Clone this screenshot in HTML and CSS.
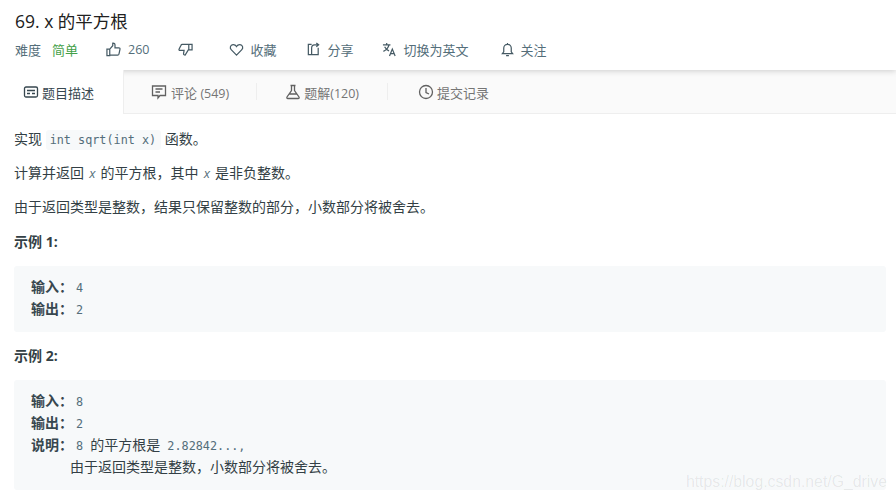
FILE: index.html
```html
<!DOCTYPE html>
<html lang="zh">
<head>
    <meta charset="UTF-8">
    <title>69. x 的平方根</title>
    <link rel="stylesheet" href="styles.css">
</head>
<body>
    <div class="header">
        <h1>69. x 的平方根</h1>
        <div class="actions">
            <span class="label">难度</span>
            <span class="easy">简单</span>
            <span class="action like">
                <svg width="15" height="15" viewBox="0 0 16 16"><path d="M1 7.500h3v7H1zM4 7.500l3.200-3.600V1.200c1.400-.3 2.400.6 2.400 2v3h4c1 0 1.500.7 1.300 1.600l-1.100 5.200c-.2.7-.7 1-1.300 1H4"/></svg>
                <span class="num">260</span>
            </span>
            <span class="action dislike">
                <svg width="15" height="15" viewBox="0 0 16 16"><path d="M15 2.500H4.500c-.7 0-1.100.3-1.300 1L1.100 7.600c-.3.8.2 1.400 1 1.400h4.400l-.6 3.300c-.1 1 .6 1.700 1.700 1.700l3.400-5.500H15zM11.500 2.500V8.500"/></svg>
            </span>
            <span class="action fav">
                <svg width="15" height="15" viewBox="0 0 16 16"><path d="M8 14L2.300 8.200C.6 6.400 1.300 3 4.300 2.700 5.900 2.600 7.200 3.400 8 4.800 8.800 3.400 10.100 2.600 11.700 2.700c3 .3 3.700 3.700 2 5.500z"/></svg>
                收藏
            </span>
            <span class="action share">
                <svg width="15" height="15" viewBox="0 0 16 16"><path d="M6 2.500H2.500v11h10.500V6M6 13V6.500c0-2 1.200-3.500 3-3.500h4.500M11 1l2.500 2L11 5"/></svg>
                分享
            </span>
            <span class="action lang">
                <svg width="15" height="15" viewBox="0 0 16 16"><path d="M1 3h8M5 1v2M7.500 3C6.800 6 4.500 8.500 1.500 10M2.800 5c1 2 2.700 3.500 4.700 4.500M8 15l3-7.500 3 7.500M9.200 12.500h3.600"/></svg>
                切换为英文
            </span>
            <span class="action follow">
                <svg width="15" height="15" viewBox="0 0 16 16"><path d="M2.500 12.500h11l-1.500-2V6.500C12 4 10.300 2.500 8 2.500S4 4 4 6.500v4zM6.500 14.500h3M8 1v1.500"/></svg>
                关注
            </span>
        </div>
    </div>

    <div class="tabs">
        <div class="tab active">
            <svg width="16" height="16" viewBox="0 0 16 16"><rect x="1.500" y="3" width="13" height="10" rx="1.500"/><path d="M4 6.500h8M4 9.500h3M9 9.500h3"/></svg>
            <span>题目描述</span>
        </div>
        <div class="tab comments">
            <svg width="16" height="16" viewBox="0 0 16 16"><path d="M1.500 2h13v9.500H9l-2 2.500v-2.500H1.500zM4.500 5h7M4.500 8h4.500"/></svg>
            <span>评论 <span class="count">(549)</span></span>
        </div>
        <div class="tab solutions">
            <svg width="16" height="16" viewBox="0 0 16 16"><path d="M5.500 1.500h5M6.500 1.500v5L2 13c-.5.900 0 1.500.9 1.500h10.200c.9 0 1.400-.6.900-1.500L9.500 6.500v-5M4.500 10h7"/></svg>
            <span>题解<span class="count">(120)</span></span>
        </div>
        <div class="tab submissions">
            <svg width="16" height="16" viewBox="0 0 16 16"><circle cx="8" cy="8" r="6.500"/><path d="M8 4v4.500l3 1.500"/></svg>
            <span>提交记录</span>
        </div>
    </div>

    <div class="content">
        <p>实现 <code>int sqrt(int x)</code> 函数。</p>
        <p>计算并返回 <em>x</em> 的平方根，其中 <em>x</em> 是非负整数。</p>
        <p class="last">由于返回类型是整数，结果只保留整数的部分，小数部分将被舍去。</p>
        <p><strong>示例 1:</strong></p>
        <pre><strong>输入：</strong><span class="mono">4</span>
<strong>输出：</strong><span class="mono">2</span></pre>
        <p><strong>示例 2:</strong></p>
        <pre><strong>输入：</strong><span class="mono">8</span>
<strong>输出：</strong><span class="mono">2</span>
<strong>说明：</strong><span class="mono">8 </span>的平方根是<span class="mono"> 2.82842...,</span>
<span class="cont">由于返回类型是整数，小数部分将被舍去。</span></pre>
    </div>

    <div class="watermark">https://blog.csdn.net/G_drive</div>
</body>
</html>
```

FILE: styles.css
```css
html, body {
    height: 499px;
    overflow: hidden;
}
body {
    margin: 0;
    font-family: "Open Sans", "Noto Sans CJK SC", sans-serif;
    font-size: 14px;
    color: #263238;
    background: #ffffff;
    position: relative;
}
svg {
    fill: none;
    stroke: currentColor;
    stroke-width: 1.300;
    flex: none;
}
.header {
    position: relative;
    height: 70px;
    padding: 0 15px;
    box-sizing: border-box;
    background: #ffffff;
    box-shadow: 0 1px 6px rgba(0, 0, 0, 0.18);
}
h1 {
    margin: 0;
    padding-top: 9px;
    height: 37px;
    box-sizing: border-box;
    font-size: 17.500px;
    line-height: 24px;
    font-weight: 400;
    color: #212121;
}
.actions {
    display: flex;
    align-items: center;
    height: 24px;
    font-size: 13px;
    color: #546e7a;
}
.easy {
    margin-left: 11px;
    color: #43a047;
}
.action {
    display: flex;
    align-items: center;
    gap: 7px;
}
.action svg {
    color: #455a64;
}
.num {
    font-size: 12.500px;
}
.like { margin-left: 28px; }
.dislike { margin-left: 29px; }
.fav { margin-left: 36px; gap: 6px; }
.share { margin-left: 29px; }
.lang { margin-left: 28px; }
.follow { margin-left: 31px; gap: 6px; }
.tabs {
    display: flex;
    height: 44px;
    box-sizing: border-box;
    background: #fafafa;
    border-bottom: 1px solid #eeeeee;
    font-size: 13px;
    color: #757575;
}
.tab {
    display: flex;
    align-items: center;
    gap: 3px;
    height: 44px;
    position: relative;
}
.tab svg {
    color: #616161;
}
.tab.active {
    width: 124px;
    box-sizing: border-box;
    padding-left: 23px;
    background: #ffffff;
    border-right: 1px solid #eeeeee;
    color: #37474f;
}
.tab.active svg {
    color: #37474f;
}
.comments {
    margin-left: 27px;
    gap: 4px;
}
.solutions {
    margin-left: 56px;
}
.submissions {
    margin-left: 59px;
}
.comments::after, .solutions::after {
    content: "";
    position: absolute;
    top: 13px;
    height: 17px;
    border-right: 1px solid #eeeeee;
}
.comments::after { right: -28px; }
.solutions::after { right: -29px; }
.count {
    font-size: 12.500px;
}
.content {
    padding: 15px 10px 0 14px;
    font-size: 14px;
    line-height: 20px;
    color: #333f45;
}
p {
    margin: 0 0 14px;
}
p.last {
    margin-bottom: 15px;
}
code {
    font-family: "DejaVu Sans Mono", monospace;
    font-size: 11.800px;
    line-height: 1;
    color: #546e7a;
    background: #f7f9fa;
    padding: 3px 5px 3px 4px;
    border-radius: 3px;
}
em {
    font-family: "Open Sans", sans-serif;
    font-size: 13px;
    line-height: 1;
    padding: 0 1.500px;
    color: #546e7a;
}
strong {
    font-weight: 700;
}
pre {
    margin: 14px 0;
    padding: 9px 17px 13px;
    background: #f7f9fa;
    border-radius: 3px;
    font-family: "Noto Sans CJK SC", sans-serif;
    font-size: 14px;
    line-height: 22px;
    color: #333f45;
}
pre strong {
    color: #37474f;
}
.mono {
    font-family: "DejaVu Sans Mono", monospace;
    font-size: 11.800px;
    line-height: 1;
    color: #546e7a;
}
strong + .mono {
    margin-left: 3px;
}
.cont {
    display: block;
    margin-left: 39px;
}
.watermark {
    position: absolute;
    right: 9px;
    bottom: 8px;
    font-family: "Liberation Sans", sans-serif;
    font-size: 15.800px;
    color: rgba(0, 0, 0, 0.08);
}
```
